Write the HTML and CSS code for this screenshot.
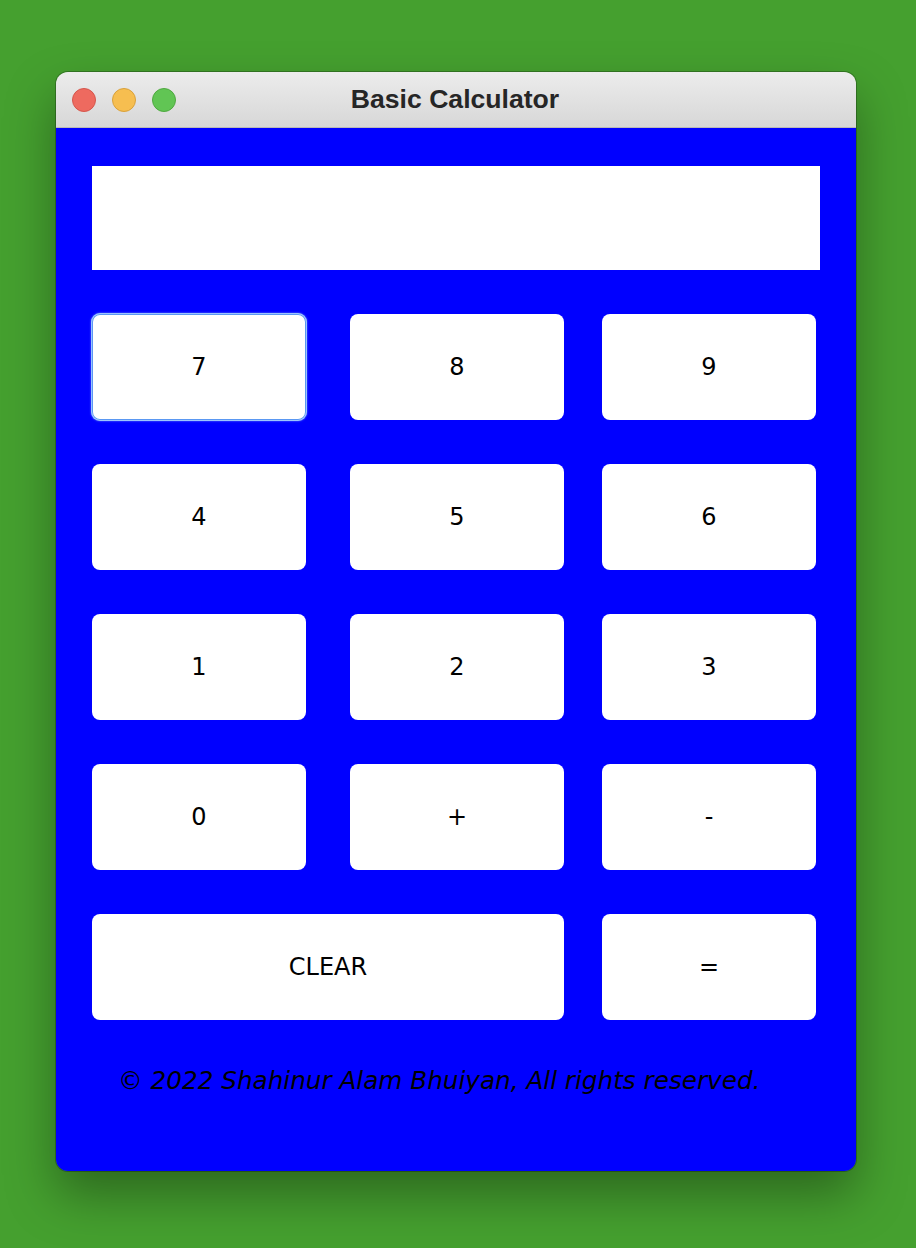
FILE: index.html
```html
<!DOCTYPE html>
<html>
<head>
<meta charset="utf-8">
<title>Basic Calculator</title>
<link rel="stylesheet" href="styles.css">
</head>
<body>
<div class="window">
  <div class="titlebar">
    <div class="lights">
      <span class="light red"></span>
      <span class="light yellow"></span>
      <span class="light green"></span>
    </div>
    <div class="title">Basic Calculator</div>
  </div>
  <div class="content">
    <div class="display"></div>
    <div class="keys">
      <button class="key focused">7</button>
      <button class="key">8</button>
      <button class="key">9</button>
      <button class="key">4</button>
      <button class="key">5</button>
      <button class="key">6</button>
      <button class="key">1</button>
      <button class="key">2</button>
      <button class="key">3</button>
      <button class="key">0</button>
      <button class="key">+</button>
      <button class="key">-</button>
      <button class="key key-wide">CLEAR</button>
      <button class="key">=</button>
    </div>
    <div class="footer">© 2022 Shahinur Alam Bhuiyan, All rights reserved.</div>
  </div>
</div>
</body>
</html>
```

FILE: styles.css
```css
html, body {
  margin: 0;
  padding: 0;
}
body {
  width: 916px;
  height: 1248px;
  background: #45a02f;
  padding: 72px 0 0 56px;
  box-sizing: border-box;
  overflow: hidden;
}
.window {
  width: 800px;
  height: 1099px;
  border-radius: 12px;
  overflow: hidden;
  display: flex;
  flex-direction: column;
  box-shadow: 0 0 0 1px rgba(0, 0, 0, 0.25), 0 24px 50px rgba(0, 0, 0, 0.35);
}
.titlebar {
  height: 55px;
  flex: 0 0 55px;
  background: linear-gradient(#ececec, #d7d7d7);
  border-bottom: 1px solid #b9b9b9;
  position: relative;
  display: flex;
  align-items: center;
  justify-content: center;
}
.lights {
  position: absolute;
  left: 16px;
  top: 16px;
  display: flex;
  gap: 16px;
}
.light {
  width: 24px;
  height: 24px;
  border-radius: 50%;
  box-sizing: border-box;
}
.red { background: #ee6a5f; border: 1px solid #d5564c; }
.yellow { background: #f6be50; border: 1px solid #d9a13b; }
.green { background: #61c554; border: 1px solid #4fa940; }
.title {
  font-family: "Liberation Sans", Arial, sans-serif;
  font-weight: bold;
  font-size: 26.6px;
  color: #262626;
  margin-right: 2px;
}
.content {
  flex: 1;
  background: #0000ff;
  padding: 38px 0 0 36px;
}
.display {
  width: 728px;
  height: 104px;
  background: #ffffff;
}
.keys {
  margin-top: 44px;
  display: grid;
  grid-template-columns: 258px 252px 214px;
  grid-auto-rows: 106px;
  row-gap: 44px;
}
.key {
  width: 214px;
  height: 106px;
  background: #ffffff;
  border: none;
  border-radius: 8px;
  font-family: "DejaVu Sans", sans-serif;
  font-size: 24px;
  color: #000000;
  padding: 0;
  margin: 0;
}
.key-wide {
  grid-column: span 2;
  width: 472px;
}
.focused {
  box-shadow: inset 0 0 0 1px #5a98f2, 0 0 0 1px #9cc4ff, 0 0 2px 1px rgba(140, 185, 255, 0.8);
}
.footer {
  margin-top: 46px;
  padding-left: 26px;
  font-family: "DejaVu Sans", sans-serif;
  font-style: italic;
  font-size: 24.7px;
  color: #000000;
}
```
